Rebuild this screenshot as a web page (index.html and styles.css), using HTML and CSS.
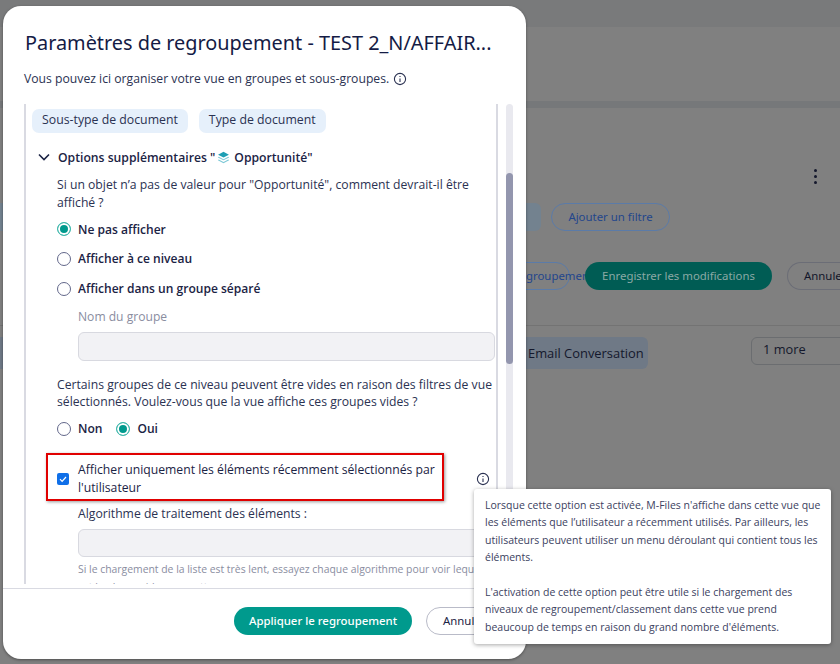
FILE: index.html
```html
<!DOCTYPE html>
<html lang="fr">
<head>
    <meta charset="UTF-8">
    <meta name="viewport" content="width=device-width, initial-scale=1.0">
    <title>Paramètres de regroupement</title>
    <link rel="stylesheet" href="styles.css">
</head>
<body>
    <div class="app">
        <div class="app-top"></div>
        <div class="app-head"></div>
        <div class="app-band"></div>
        <div class="app-main">
            <div class="app-menu"><span class="dot"></span><span class="dot"></span><span class="dot"></span></div>
            <div class="app-filters">
                <span class="sliver"></span>
                <span class="app-chip-end"></span>
                <span class="app-outline">Ajouter un filtre</span>
            </div>
            <div class="app-actions">
                <span class="app-outline app-clipped">groupement</span>
                <span class="app-save">Enregistrer les modifications</span>
                <span class="app-cancel">Annuler</span>
            </div>
            <div class="app-row">
                <span class="sliver sliver-tag"></span>
                <span class="app-tag">Email Conversation</span>
                <span class="app-more">1 more</span>
            </div>
        </div>
    </div>

    <div class="modal">
        <h1 class="modal-title">Paramètres de regroupement - TEST 2_N/AFFAIR...</h1>
        <p class="modal-intro">
            Vous pouvez ici organiser votre vue en groupes et sous-groupes.
            <svg class="info" viewBox="0 0 14 14"><circle cx="7" cy="7" r="5.6"/><path d="M7 6.4v3.6M7 4v1"/></svg>
        </p>

        <div class="scroll-wrap">
            <div class="content">
                <div class="tags">
                    <span class="tag">Sous-type de document</span>
                    <span class="tag">Type de document</span>
                </div>

                <div class="section-head">
                    <svg class="chevron" viewBox="0 0 12 8"><path d="M1 1.5l5 5 5-5"/></svg>
                    <span>Options supplémentaires "</span>
                    <svg class="layers" viewBox="0 0 12 12"><path class="l1" d="M6 .8l5 2.6-5 2.6-5-2.6z"/><path class="l2" d="M1.6 5.3L6 7.6l4.4-2.3 .8.6L6 8.6.8 5.9z"/><path class="l2" d="M1.6 7.9L6 10.2l4.4-2.3 .8.6L6 11.2.8 8.5z"/></svg>
                    <span class="section-name">Opportunité"</span>
                </div>

                <div class="options">
                    <p class="text">Si un objet n’a pas de valeur pour "Opportunité", comment devrait-il être affiché ?</p>

                    <div class="radio-list">
                        <label class="radio-row"><span class="radio checked"></span>Ne pas afficher</label>
                        <label class="radio-row"><span class="radio"></span>Afficher à ce niveau</label>
                        <label class="radio-row"><span class="radio"></span>Afficher dans un groupe séparé</label>
                    </div>

                    <div class="field">
                        <div class="field-label">Nom du groupe</div>
                        <div class="input"></div>
                    </div>

                    <p class="text empty-text">Certains groupes de ce niveau peuvent être vides en raison des filtres de vue sélectionnés. Voulez-vous que la vue affiche ces groupes vides ?</p>

                    <div class="radio-inline">
                        <label class="radio-row"><span class="radio"></span>Non</label>
                        <label class="radio-row"><span class="radio checked"></span>Oui</label>
                    </div>

                    <div class="check-row">
                        <div class="highlight">
                            <span class="checkbox">
                                <svg viewBox="0 0 12 12"><path d="M3 6.2l2.1 2.1L9 4"/></svg>
                            </span>
                            <span class="check-label">Afficher uniquement les éléments récemment sélectionnés par l'utilisateur</span>
                        </div>
                        <svg class="info info-large" viewBox="0 0 14 14"><circle cx="7" cy="7" r="5.6"/><path d="M7 6.4v3.6M7 4v1"/></svg>
                    </div>

                    <div class="field algo">
                        <div class="algo-label">Algorithme de traitement des éléments :</div>
                        <div class="input"></div>
                        <p class="hint">Si le chargement de la liste est très lent, essayez chaque algorithme pour voir lequel est le plus rapide pour cette vue.</p>
                    </div>
                </div>
            </div>
            <div class="scrollbar"><div class="thumb"></div></div>
        </div>

        <div class="modal-footer">
            <button class="btn btn-primary">Appliquer le regroupement</button>
            <button class="btn btn-cancel">Annuler</button>
        </div>
    </div>

    <div class="tooltip">
        <p>Lorsque cette option est activée, M-Files n'affiche dans cette vue que les éléments que l’utilisateur a récemment utilisés. Par ailleurs, les utilisateurs peuvent utiliser un menu déroulant qui contient tous les éléments.</p>
        <p>L'activation de cette option peut être utile si le chargement des niveaux de regroupement/classement dans cette vue prend beaucoup de temps en raison du grand nombre d'éléments.</p>
    </div>
</body>
</html>
```

FILE: styles.css
```css
* {
    box-sizing: border-box;
}
html, body {
    height: 100%;
}
body {
    margin: 0;
    width: 840px;
    height: 664px;
    overflow: hidden;
    position: relative;
    background-color: #808080;
    font-family: "Open Sans", sans-serif;
    color: #1b2344;
}

/* page behind the dialog */
.app {
    height: 664px;
    display: flex;
    flex-direction: column;
    background-color: #808080;
}
.app-top {
    height: 27px;
    background-color: #797a7b;
}
.app-head {
    height: 74px;
}
.app-band {
    height: 7px;
    background-color: #76787a;
}
.app-main {
    position: relative;
    flex: 1;
}
.app-menu {
    position: absolute;
    left: 814px;
    top: 61px;
    display: flex;
    flex-direction: column;
    gap: 3px;
}
.dot {
    width: 3px;
    height: 3px;
    border-radius: 50%;
    background-color: #14182c;
}
.sliver {
    width: 3px;
    height: 28px;
    margin-right: 477px;
    flex: none;
    background-color: #73828f;
}
.sliver-tag {
    height: 32px;
    background-color: #6f7986;
}
.app-filters {
    margin-top: 95px;
    height: 28px;
    display: flex;
    align-items: center;
    gap: 10px;
}
.app-filters .sliver {
    margin-right: 467px;
}
.app-chip-end {
    width: 61px;
    height: 28px;
    flex: none;
    border-radius: 6px;
    background-color: #73828f;
}
.app-outline {
    height: 28px;
    width: 119px;
    flex: none;
    text-align: center;
    border: 1px solid #5b7ba8;
    border-radius: 14px;
    color: #23468c;
    font-family: "Noto Sans", sans-serif;
    font-size: 11.4px;
    line-height: 25px;
}
.app-actions {
    margin-top: 31px;
    margin-left: 480px;
    height: 28px;
    display: flex;
}
.app-clipped {
    width: 90px;
    padding: 0 0 0 45px;
    text-align: left;
    white-space: nowrap;
}
.app-save {
    margin-left: 15px;
    width: 187px;
    height: 28px;
    flex: none;
    border-radius: 14px;
    background-color: #005c54;
    color: #8aa9a5;
    font-family: "Noto Sans", sans-serif;
    font-size: 11.4px;
    line-height: 28px;
    text-align: center;
    white-space: nowrap;
}
.app-cancel {
    margin-left: 15px;
    width: 53px;
    height: 28px;
    flex: none;
    padding-left: 16px;
    overflow: hidden;
    border: 1px solid #6b6d76;
    border-right: none;
    border-radius: 14px 0 0 14px;
    color: #12162a;
    font-family: "Noto Sans", sans-serif;
    font-size: 11.4px;
    line-height: 26px;
    white-space: nowrap;
}
.app-row {
    margin-top: 35px;
    padding-top: 11px;
    border-top: 1px solid #737373;
    display: flex;
    align-items: flex-start;
}
.app-tag {
    width: 168px;
    height: 32px;
    flex: none;
    padding-left: 48px;
    border-radius: 6px;
    background-color: #6f7986;
    color: #14182c;
    font-size: 12.9px;
    line-height: 32px;
    white-space: nowrap;
}
.app-more {
    margin-left: 103px;
    width: 100px;
    height: 28px;
    flex: none;
    padding-left: 11px;
    border: 1px solid #6b6d70;
    border-radius: 6px;
    color: #14182c;
    font-size: 12.8px;
    line-height: 23px;
}

/* dialog */
.modal {
    position: absolute;
    left: 3px;
    top: 6px;
    width: 523px;
    height: 653px;
    display: flex;
    flex-direction: column;
    padding-top: 23px;
    background-color: white;
    border-radius: 18px;
    box-shadow: 0 1px 3px rgba(0, 0, 0, 0.4);
}
.modal-title {
    margin: 0 0 0 22px;
    font-family: "Noto Sans", sans-serif;
    font-size: 19.87px;
    font-weight: 400;
    line-height: 27px;
    color: #141b45;
    white-space: nowrap;
}
.modal-intro {
    margin: 14px 0 0 21px;
    height: 18px;
    display: flex;
    align-items: center;
    gap: 4px;
    font-size: 12.2px;
    line-height: 18px;
    color: #2b3252;
}
.info {
    width: 14px;
    height: 14px;
    flex: none;
    fill: none;
    stroke: #2b3252;
    stroke-width: 1.1;
}
.scroll-wrap {
    margin-top: 16px;
    height: 480px;
    display: flex;
    flex: none;
}
.content {
    margin-left: 21px;
    width: 474px;
    padding-left: 6px;
    height: 100%;
    overflow: hidden;
    border-left: 2px solid #d9dae2;
    border-right: 2px solid #d9dae2;
}
.scrollbar {
    margin-left: 8px;
    width: 7px;
    height: 100%;
    border-radius: 4px;
    background-color: #e9e9ef;
    padding-top: 69px;
}
.thumb {
    height: 191px;
    border-radius: 4px;
    background-color: #9396ae;
}
.tags {
    margin-top: 5px;
    display: flex;
    gap: 11px;
}
.tag {
    height: 24px;
    padding: 0 10px;
    border-radius: 7px;
    background-color: #e6f0fb;
    font-size: 12.3px;
    line-height: 22px;
    color: #2b3252;
}
.section-head {
    margin-top: 14px;
    height: 20px;
    padding-left: 6px;
    display: flex;
    align-items: center;
    font-size: 12.2px;
    font-weight: 600;
    color: #1b2344;
}
.chevron {
    width: 12px;
    height: 8px;
    margin-right: 8px;
    fill: none;
    stroke: #1b2344;
    stroke-width: 1.6;
}
.layers {
    width: 13px;
    height: 13px;
    margin: 0 4px 0 2px;
}
.l1 {
    fill: #1e9fb4;
}
.l2 {
    fill: #7cc8d6;
}
.options {
    padding-left: 25px;
    padding-right: 1px;
}
.text {
    margin: 9px 0 0;
    font-size: 12.2px;
    line-height: 17.5px;
    color: #2b3252;
}
.radio-list {
    margin-top: 8px;
    display: flex;
    flex-direction: column;
    gap: 9.75px;
}
.radio-row {
    height: 20px;
    display: flex;
    align-items: center;
    gap: 7px;
    font-size: 12.05px;
    font-weight: 600;
    color: #1b2344;
}
.radio {
    width: 14px;
    height: 14px;
    flex: none;
    border: 1px solid #62678a;
    border-radius: 50%;
    background-color: white;
}
.radio.checked {
    border-color: #3fb9ad;
    background-color: #009a8d;
    box-shadow: inset 0 0 0 2px white;
}
.field {
    margin-left: 21px;
}
.field-label {
    margin-top: 9px;
    font-size: 12.1px;
    line-height: 18px;
    color: #8a8d9f;
}
.input {
    margin-top: 6.5px;
    height: 29px;
    border: 1px solid #d8d9e0;
    border-radius: 6px;
    background-color: #f2f2f5;
}
.empty-text {
    margin-top: 14.5px;
}
.radio-inline {
    margin-top: 8px;
    display: flex;
    gap: 14px;
}
.check-row {
    margin-top: 14px;
    display: flex;
    align-items: flex-start;
}
.highlight {
    margin-left: -11px;
    width: 398px;
    height: 48px;
    padding: 4px 0 0 9px;
    display: flex;
    align-items: center;
    gap: 9px;
    border: 2px solid #e00000;
    box-shadow: 1px 1px 3px rgba(0, 0, 0, 0.4);
}
.checkbox {
    width: 12px;
    height: 12px;
    flex: none;
    border-radius: 2px;
    background-color: #0f6fe8;
}
.checkbox svg {
    display: block;
    fill: none;
    stroke: white;
    stroke-width: 1.2;
}
.check-label {
    font-size: 12.2px;
    line-height: 17.5px;
    color: #1b2344;
}
.info-large {
    margin: 19px 0 0 32px;
}
.algo-label {
    margin-top: 4px;
    font-size: 12.2px;
    line-height: 18px;
    color: #2b3252;
}
.algo .input {
    margin-top: 6px;
    height: 28px;
}
.hint {
    margin: 3px 0 0;
    font-size: 10.4px;
    line-height: 18px;
    color: #8a8d9f;
}
.modal-footer {
    margin-top: 4px;
    padding: 18px 0 0 231px;
    display: flex;
    gap: 14px;
    flex: none;
    border-top: 1px solid #d9dae2;
}
.btn {
    height: 28px;
    border-radius: 14px;
    font-family: "Noto Sans", sans-serif;
    font-size: 11.4px;
    cursor: pointer;
}
.btn-primary {
    width: 178px;
    padding: 0 0 2px;
    border: none;
    background-color: #009a8d;
    color: white;
    font-weight: 500;
}
.btn-cancel {
    width: 80px;
    padding: 0 0 2px 16px;
    text-align: left;
    border: 1px solid #b9bbc8;
    background-color: white;
    color: #1b2344;
}

/* tooltip over the dialog */
.tooltip {
    position: absolute;
    left: 474px;
    top: 489px;
    width: 357px;
    height: 155px;
    padding: 8px 10px 7px 11px;
    background-color: white;
    border-radius: 3px;
    box-shadow: 0 1px 4px rgba(0, 0, 0, 0.35);
    font-size: 10.5px;
    line-height: 17.4px;
    color: #3b4160;
}
.tooltip p {
    margin: 0 0 17.4px;
}
```
